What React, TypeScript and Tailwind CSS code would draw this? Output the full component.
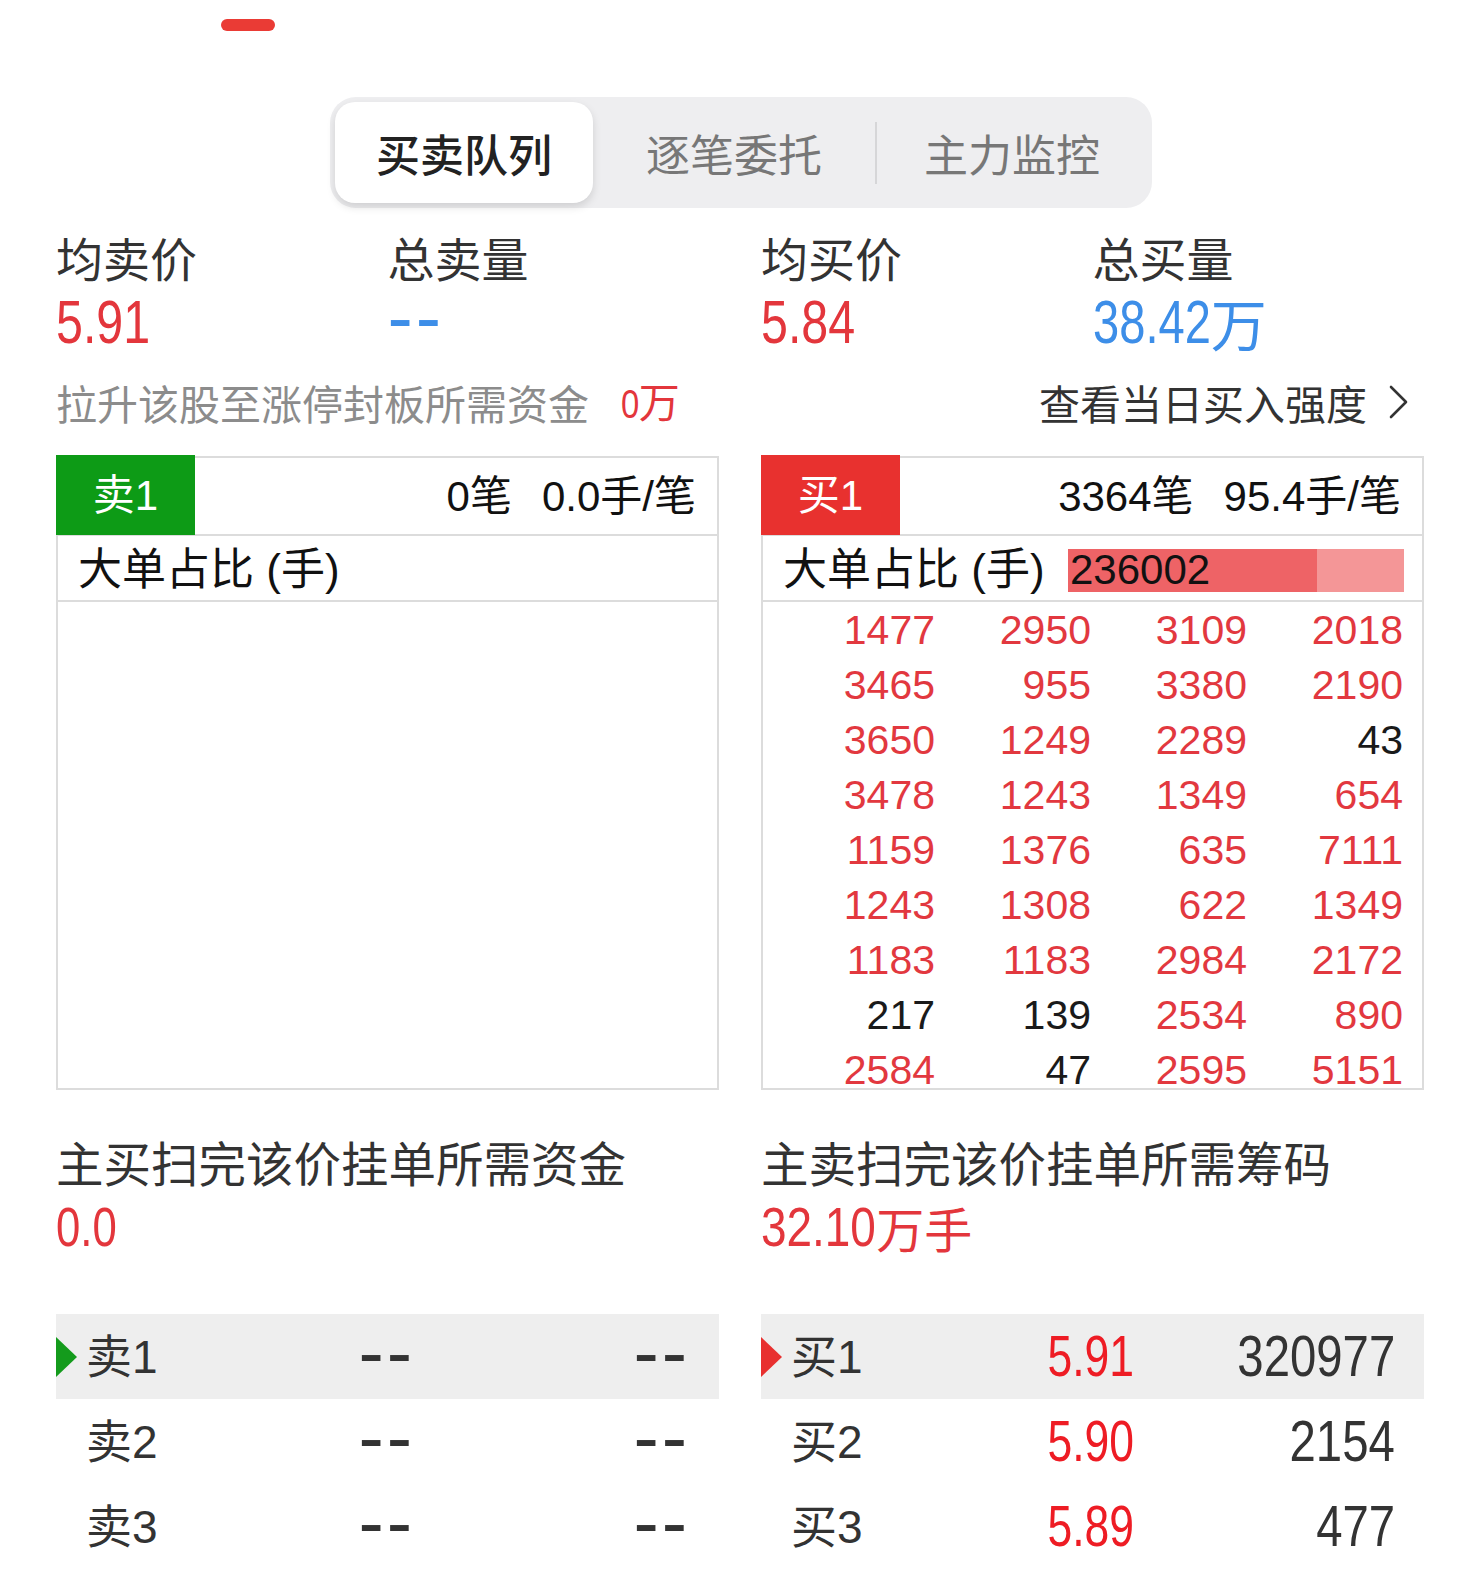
import React from "react";

const GRID: [string, boolean][][] = [
  [["1477", true], ["2950", true], ["3109", true], ["2018", true]],
  [["3465", true], ["955", true], ["3380", true], ["2190", true]],
  [["3650", true], ["1249", true], ["2289", true], ["43", false]],
  [["3478", true], ["1243", true], ["1349", true], ["654", true]],
  [["1159", true], ["1376", true], ["635", true], ["7111", true]],
  [["1243", true], ["1308", true], ["622", true], ["1349", true]],
  [["1183", true], ["1183", true], ["2984", true], ["2172", true]],
  [["217", false], ["139", false], ["2534", true], ["890", true]],
  [["2584", true], ["47", false], ["2595", true], ["5151", true]],
];

const NUM = "font-['Liberation_Sans','Noto_Sans_CJK_SC',sans-serif]";
const CJK = "font-['Noto_Sans_CJK_SC','Liberation_Sans',sans-serif]";

function Stat({ label, children }: { label: string; children: React.ReactNode }) {
  return (
    <div className="flex flex-col">
      <div className={`${CJK} h-[46px] text-[47px] leading-none text-[#333]`}>{label}</div>
      <div className={`${NUM} mt-[12px] flex h-[62px] items-center text-[62px] leading-none`}>{children}</div>
    </div>
  );
}

function Chevron() {
  return (
    <svg width="22" height="36" viewBox="0 0 22 36" fill="none">
      <polyline points="4,3 19,18 4,33" stroke="#333" strokeWidth="2.6" strokeLinecap="round" strokeLinejoin="round" />
    </svg>
  );
}

// "--" placeholder, drawn big so the hyphens get the app's thick look
function Dashes({ className = "" }: { className?: string }) {
  return (
    <span className={`${NUM} inline-block h-[40px] text-[76px] leading-[40px] tracking-[3px] ${className}`}>
      --
    </span>
  );
}

export default function App() {
  return (
    <div className={`${CJK} h-[1587px] w-[1479px] overflow-hidden bg-white`}>
      {/* top indicator */}
      <div className="pt-[19px]">
        <div className="ml-[221px] h-[12px] w-[54px] rounded-full bg-[#ea3b35]" />
      </div>

      {/* segmented tabs */}
      <div className="ml-[330px] mt-[66px] flex h-[111px] w-[822px] items-center rounded-[26px] bg-[#eeeef0] p-[5px]">
        <div className="flex h-[101px] w-[258px] items-center justify-center rounded-[20px] bg-white text-[44px] font-medium text-[#222] shadow-[0_4px_8px_rgba(0,0,0,0.13)]">
          买卖队列
        </div>
        <div className="flex h-full w-[282px] items-center justify-center text-[44px] text-[#777]">逐笔委托</div>
        <div className="h-[62px] w-[2px] bg-[#d6d6d8]" />
        <div className="flex h-full flex-1 items-center justify-center text-[44px] text-[#777]">主力监控</div>
      </div>

      {/* averages */}
      <div className="mt-[25px] grid grid-cols-[663px_663px] gap-x-[42px] pl-[56px]">
        <div className="grid grid-cols-2">
          <Stat label="均卖价">
            <span className="inline-block origin-left scale-x-[0.78] text-[#e3363c]">5.91</span>
          </Stat>
          <Stat label="总卖量">
            <Dashes className="-translate-y-[5px] text-[#3d8ee8]" />
          </Stat>
        </div>
        <div className="grid grid-cols-2">
          <Stat label="均买价">
            <span className="inline-block origin-left scale-x-[0.78] text-[#e3363c]">5.84</span>
          </Stat>
          <Stat label="总买量">
            <span className="flex items-center text-[#3d8ee8]">
              <span className="mr-[-37px] inline-block origin-left scale-x-[0.76]">38.42</span>
              <span className={`${CJK} text-[56px]`}>万</span>
            </span>
          </Stat>
        </div>
      </div>

      <div className="mt-[29px] grid grid-cols-[663px_663px] gap-x-[42px] pl-[56px]">
        <div className="flex h-[40px] items-center text-[41px] leading-none">
          <span className="text-[#8c8c8c]">拉升该股至涨停封板所需资金</span>
          <span className={`${NUM} ml-[32px] text-[#e3363c]`}>
            <span className="mr-[-5px] inline-block origin-left scale-x-[0.8]">0</span>
            <span className={CJK}>万</span>
          </span>
        </div>
        <div className="flex h-[40px] items-center justify-end gap-[20px] pr-[15px] text-[41px] leading-none text-[#333]">
          <span>查看当日买入强度</span>
          <Chevron />
        </div>
      </div>

      {/* queue panels */}
      <div className="mt-[34px] grid grid-cols-[663px_663px] gap-x-[42px] pl-[56px]">
        <div className="flex h-[634px] flex-col border-2 border-[#dcdcdc]">
          <div className="flex h-[78px] items-center border-b-2 border-[#dcdcdc]">
            <div className={`${NUM} -ml-[2px] -mt-[2px] flex h-[80px] w-[139px] items-center justify-center bg-[#0d9b16] text-[42px] text-white`}>
              卖1
            </div>
            <div className={`${NUM} ml-auto pr-[21px] text-[42px] text-[#111]`}>
              0笔<span className="ml-[30px]">0.0手/笔</span>
            </div>
          </div>
          <div className={`${NUM} flex h-[66px] items-center border-b-2 border-[#dcdcdc] pl-[20px] pt-[4px] text-[44px] text-[#111]`}>
            大单占比 (手)
          </div>
          <div className="flex-1" />
        </div>

        <div className="flex h-[634px] flex-col border-2 border-[#dcdcdc]">
          <div className="flex h-[78px] items-center border-b-2 border-[#dcdcdc]">
            <div className={`${NUM} -ml-[2px] -mt-[2px] flex h-[80px] w-[139px] items-center justify-center bg-[#e8312f] text-[42px] text-white`}>
              买1
            </div>
            <div className={`${NUM} ml-auto pr-[21px] text-[42px] text-[#111]`}>
              3364笔<span className="ml-[30px]">95.4手/笔</span>
            </div>
          </div>
          <div className={`${NUM} flex h-[66px] items-center border-b-2 border-[#dcdcdc] pl-[20px] pr-[18px] pt-[4px] text-[44px] text-[#111]`}>
            <span>大单占比 (手)</span>
            <div className="relative ml-auto flex h-[43px] w-[336px] bg-[#f49697]">
              <div className="h-full w-[249px] bg-[#ee6366]" />
              <span className="absolute left-[2px] top-0 flex h-full items-center font-['Liberation_Sans',sans-serif] text-[42px] leading-none text-[#111]">
                236002
              </span>
            </div>
          </div>
          <div className="flex-1 overflow-hidden">
            <div className="grid grid-cols-4 pl-[16px] pr-[19px] pt-[1px] font-['Liberation_Sans',sans-serif] text-[41px] leading-none">
              {GRID.flat().map(([v, red], i) => (
                <div
                  key={i}
                  className={`flex h-[55px] items-center justify-end ${red ? "text-[#e2383f]" : "text-[#1a1a1a]"}`}
                >
                  {v}
                </div>
              ))}
            </div>
          </div>
        </div>
      </div>

      {/* sweep costs */}
      <div className="mt-[48px] grid grid-cols-[663px_663px] gap-x-[42px] pl-[56px]">
        <div>
          <div className="h-[47px] text-[47.5px] leading-none text-[#333]">主买扫完该价挂单所需资金</div>
          <div className={`${NUM} mt-[14px] h-[56px] text-[56px] leading-none text-[#e3363c]`}>
            <span className="inline-block origin-left scale-x-[0.78]">0.0</span>
          </div>
        </div>
        <div>
          <div className="h-[47px] text-[47.5px] leading-none text-[#333]">主卖扫完该价挂单所需筹码</div>
          <div className={`${NUM} mt-[14px] flex h-[56px] items-center text-[56px] leading-none text-[#e3363c]`}>
            <span className="mr-[-25px] inline-block origin-left scale-x-[0.82]">32.10</span>
            <span className={`${CJK} text-[48px]`}>万手</span>
          </div>
        </div>
      </div>

      {/* order book */}
      <div className={`${NUM} mt-[59px] grid grid-cols-[663px_663px] gap-x-[42px] pl-[56px] text-[#333]`}>
        <div className="flex flex-col">
          {["卖1", "卖2", "卖3"].map((l, i) => (
            <div key={l} className={`flex h-[85px] items-center ${i === 0 ? "bg-[#eeeeee]" : ""}`}>
              <div className="flex w-[30px] items-center">
                {i === 0 && (
                  <div className="h-0 w-0 border-y-[20px] border-l-[21px] border-y-transparent border-l-[#149b1c]" />
                )}
              </div>
              <span className="w-[200px] text-[46px] leading-none">{l}</span>
              <span className="flex w-[129px] items-center justify-end">
                <Dashes className="-translate-y-[5px] text-[#333]" />
              </span>
              <span className="flex flex-1 items-center justify-end pr-[29px]">
                <Dashes className="-translate-y-[5px] text-[#333]" />
              </span>
            </div>
          ))}
        </div>
        <div className="flex flex-col">
          {[
            ["买1", "5.91", "320977"],
            ["买2", "5.90", "2154"],
            ["买3", "5.89", "477"],
          ].map(([l, p, v], i) => (
            <div key={l} className={`flex h-[85px] items-center ${i === 0 ? "bg-[#eeeeee]" : ""}`}>
              <div className="flex w-[30px] items-center">
                {i === 0 && (
                  <div className="h-0 w-0 border-y-[20px] border-l-[21px] border-y-transparent border-l-[#e8302f]" />
                )}
              </div>
              <span className="w-[200px] text-[46px] leading-none">{l}</span>
              <span className="w-[143px] text-right text-[57px] leading-none text-[#ee1c24]">
                <span className="inline-block origin-right scale-x-[0.78]">{p}</span>
              </span>
              <span className="flex-1 pr-[29px] text-right text-[57px] leading-none">
                <span className="inline-block origin-right scale-x-[0.83]">{v}</span>
              </span>
            </div>
          ))}
        </div>
      </div>
    </div>
  );
}
